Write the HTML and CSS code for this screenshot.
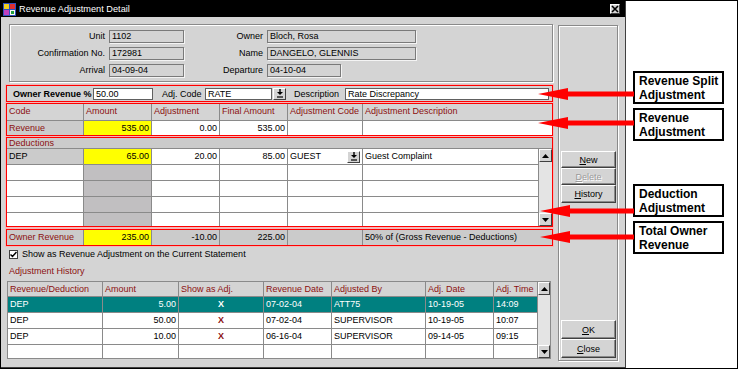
FILE: index.html
```html
<!DOCTYPE html>
<html lang="en">
<head>
    <meta charset="UTF-8">
    <title>Revenue Adjustment Detail</title>
    <link rel="stylesheet" href="styles.css">
</head>
<body>
<div class="screen">
    <div class="dialog">
        <div class="titlebar">
            <svg class="appicon" width="13" height="13" viewBox="0 0 13 13">
                <rect x="0" y="0" width="13" height="13" fill="#3050c0"/>
                <rect x="1" y="1" width="5" height="5" fill="#f0d020"/>
                <rect x="7" y="1" width="5" height="5" fill="#e03030"/>
                <rect x="1" y="7" width="5" height="5" fill="#c040c0"/>
                <rect x="7" y="7" width="5" height="5" fill="#f8f8f8"/>
                <rect x="8" y="8" width="3" height="3" fill="#20a040"/>
            </svg>
            <span class="title">Revenue Adjustment Detail</span>
            <span class="closebox">
                <svg width="8" height="8" viewBox="0 0 8 8"><path d="M1 1L7 7M7 1L1 7" stroke="#000" stroke-width="1.6"/></svg>
            </span>
        </div>

        <div class="body">
            <div class="main">
                <div class="group info">
                    <span class="lbl">Unit</span><span class="field">1102</span>
                    <span class="lbl">Owner</span><span class="field">Bloch, Rosa</span>
                    <span class="lbl">Confirmation No.</span><span class="field">172981</span>
                    <span class="lbl">Name</span><span class="field">DANGELO, GLENNIS</span>
                    <span class="lbl">Arrival</span><span class="field">04-09-04</span>
                    <span class="lbl">Departure</span><span class="field short">04-10-04</span>
                </div>

                <div class="redbox split">
                    <span class="bold-lbl">Owner Revenue %</span>
                    <span class="edit pct">50.00</span>
                    <span class="lbl-adj">Adj. Code</span>
                    <span class="edit code">RATE</span>
                    <span class="dropbtn">
                        <svg width="8" height="9" viewBox="0 0 8 9"><path d="M4 0v3" stroke="#000" stroke-width="1.4"/><polygon points="1,3 7,3 4,6" fill="#000"/><path d="M1 8h6" stroke="#000" stroke-width="1.2"/></svg>
                    </span>
                    <span class="lbl-desc">Description</span>
                    <span class="edit desc">Rate Discrepancy</span>
                </div>

                <div class="redbox revbox">
                    <div class="cols rev">
                        <div class="hd">Code</div>
                        <div class="hd">Amount</div>
                        <div class="hd">Adjustment</div>
                        <div class="hd">Final Amount</div>
                        <div class="hd">Adjustment Code</div>
                        <div class="hd">Adjustment Description</div>
                        <div class="hatch maroon">Revenue</div>
                        <div class="yellow num">535.00</div>
                        <div class="white num">0.00</div>
                        <div class="white num">535.00</div>
                        <div class="white"></div>
                        <div class="white"></div>
                    </div>
                </div>

                <div class="redbox ded">
                    <div class="ded-head">Deductions</div>
                    <div class="ded-body">
                        <div class="cols ded-rows">
                            <div class="hatch">DEP</div>
                            <div class="yellow num">65.00</div>
                            <div class="white num">20.00</div>
                            <div class="white num">85.00</div>
                            <div class="white pick">GUEST
                                <span class="dropbtn">
                                    <svg width="8" height="9" viewBox="0 0 8 9"><path d="M4 0v3" stroke="#000" stroke-width="1.4"/><polygon points="1,3 7,3 4,6" fill="#000"/><path d="M1 8h6" stroke="#000" stroke-width="1.2"/></svg>
                                </span>
                            </div>
                            <div class="white">Guest Complaint</div>

                            <div class="white"></div><div class="dark"></div><div class="white"></div><div class="white"></div><div class="white"></div><div class="white"></div>
                            <div class="white"></div><div class="dark"></div><div class="white"></div><div class="white"></div><div class="white"></div><div class="white"></div>
                            <div class="white"></div><div class="dark"></div><div class="white"></div><div class="white"></div><div class="white"></div><div class="white"></div>
                            <div class="white"></div><div class="dark"></div><div class="white"></div><div class="white"></div><div class="white"></div><div class="white"></div>
                        </div>
                        <div class="vscroll">
                            <span class="sbtn"><svg width="7" height="4" viewBox="0 0 7 4"><polygon points="0,4 7,4 3.5,0" fill="#000"/></svg></span>
                            <span class="track"></span>
                            <span class="sbtn"><svg width="7" height="4" viewBox="0 0 7 4"><polygon points="0,0 7,0 3.5,4" fill="#000"/></svg></span>
                        </div>
                    </div>
                </div>

                <div class="redbox totalbox">
                    <div class="cols total">
                        <div class="hatch maroon">Owner Revenue</div>
                        <div class="yellow num">235.00</div>
                        <div class="hatch num">-10.00</div>
                        <div class="hatch num">225.00</div>
                        <div class="hatch"></div>
                        <div class="hatch">50% of (Gross Revenue - Deductions)</div>
                    </div>
                </div>

                <div class="check">
                    <span class="box">
                        <svg width="7" height="7" viewBox="0 0 7 7"><path d="M0.5 3.5L2.5 5.5L6.5 1" fill="none" stroke="#000" stroke-width="1.5"/></svg>
                    </span>
                    <span>Show as Revenue Adjustment on the Current Statement</span>
                </div>

                <div class="hist-title">Adjustment History</div>

                <div class="hist">
                    <div class="hcols">
                        <div class="hd">Revenue/Deduction</div>
                        <div class="hd">Amount</div>
                        <div class="hd">Show as Adj.</div>
                        <div class="hd">Revenue Date</div>
                        <div class="hd">Adjusted By</div>
                        <div class="hd">Adj. Date</div>
                        <div class="hd">Adj. Time</div>

                        <div class="sel">DEP</div>
                        <div class="sel num">5.00</div>
                        <div class="sel mark">X</div>
                        <div class="sel">07-02-04</div>
                        <div class="sel">ATT75</div>
                        <div class="sel">10-19-05</div>
                        <div class="sel">14:09</div>

                        <div class="white">DEP</div>
                        <div class="white num">50.00</div>
                        <div class="white mark">X</div>
                        <div class="white">07-02-04</div>
                        <div class="white">SUPERVISOR</div>
                        <div class="white">10-19-05</div>
                        <div class="white">10:07</div>

                        <div class="white">DEP</div>
                        <div class="white num">10.00</div>
                        <div class="white mark">X</div>
                        <div class="white">06-16-04</div>
                        <div class="white">SUPERVISOR</div>
                        <div class="white">09-14-05</div>
                        <div class="white">09:15</div>

                        <div class="white"></div><div class="white"></div><div class="white"></div><div class="white"></div><div class="white"></div><div class="white"></div><div class="white"></div>
                    </div>
                    <div class="vscroll">
                        <span class="sbtn"><svg width="7" height="4" viewBox="0 0 7 4"><polygon points="0,4 7,4 3.5,0" fill="#000"/></svg></span>
                        <span class="track"></span>
                        <span class="sbtn"><svg width="7" height="4" viewBox="0 0 7 4"><polygon points="0,0 7,0 3.5,4" fill="#000"/></svg></span>
                    </div>
                </div>
            </div>

            <div class="side">
                <span class="btn"><u>N</u>ew</span>
                <span class="btn off"><u>D</u>elete</span>
                <span class="btn tall"><u>H</u>istory</span>
                <span class="btn big push"><u>O</u>K</span>
                <span class="btn big"><u>C</u>lose</span>
            </div>
        </div>
    </div>

    <div class="notes">
        <div class="note first">Revenue Split<br>Adjustment</div>
        <div class="note">Revenue<br>Adjustment</div>
        <div class="note third">Deduction<br>Adjustment</div>
        <div class="note">Total Owner<br>Revenue</div>
    </div>

    <svg class="arrows" width="738" height="369" viewBox="0 0 738 369">
        <polygon points="538,94 568,88 568,91.5 634,91.5 634,96.5 568,96.5 568,100" fill="#ff0000"/>
        <polygon points="538,123 568,117 568,120.5 634,120.5 634,125.5 568,125.5 568,129" fill="#ff0000"/>
        <polygon points="540,211 570,205 570,208.5 634,208.5 634,213.5 570,213.5 570,217" fill="#ff0000"/>
        <polygon points="540,237 570,231 570,234.5 634,234.5 634,239.5 570,239.5 570,243" fill="#ff0000"/>
    </svg>
</div>
</body>
</html>
```

FILE: styles.css
```css
body
{
    margin: 0;
    font-family: "Liberation Sans", Arial, sans-serif;
    font-size: 9px;
    color: #000;
}
*
{
    box-sizing: border-box;
}
.screen
{
    position: relative;
    width: 738px;
    height: 369px;
    border: 1px solid #000;
    background: #fff;
    display: flex;
}
.dialog
{
    width: 625px;
    height: 367px;
    background: #d4d4d4;
    border-right: 1px solid #404040;
    border-bottom: 1px solid #404040;
    display: flex;
    flex-direction: column;
}
.titlebar
{
    height: 16px;
    background: #000;
    color: #fff;
    display: flex;
    align-items: center;
    padding: 0 5px 0 2px;
}
.appicon
{
    margin-right: 3px;
}
.title
{
    font-size: 9.2px;
}
.closebox
{
    margin-left: auto;
    width: 10px;
    height: 10px;
    background: #d4d4d4;
    border-top: 1px solid #fff;
    border-left: 1px solid #fff;
    border-right: 1px solid #404040;
    border-bottom: 1px solid #404040;
    display: flex;
    align-items: center;
    justify-content: center;
}
.body
{
    display: flex;
    padding: 7px 0 0 5px;
}
.main
{
    width: 547px;
    display: flex;
    flex-direction: column;
}

/* top info group */
.group
{
    border: 1px solid #8a8a8a;
    box-shadow: inset 1px 1px 0 #fff, 1px 1px 0 #fff;
}
.info
{
    margin-left: 3px;
    width: 544px;
    height: 58px;
    padding: 5px 0 0 1px;
    display: grid;
    grid-template-columns: 94px 75px 75px 149px;
    grid-auto-rows: 13px;
    column-gap: 4px;
    row-gap: 4px;
    align-content: start;
}
.lbl
{
    text-align: right;
    line-height: 13px;
    white-space: nowrap;
}
.field
{
    border: 1px solid #7a7a7a;
    box-shadow: 1px 1px 0 #f4f4f4;
    padding-left: 2px;
    line-height: 11px;
    white-space: nowrap;
}
.field.short
{
    width: 74px;
}

/* red outlined areas */
.redbox
{
    border: 1px solid #ff0000;
    box-shadow: 0 0 0 1px #f2b8b8;
}
.split
{
    margin-top: 3px;
    height: 17px;
    display: flex;
    align-items: center;
    padding-left: 6px;
}
.bold-lbl
{
    font-weight: bold;
    width: 80px;
    white-space: nowrap;
}
.edit
{
    height: 12px;
    line-height: 10px;
    background: #fff;
    border: 1px solid #606060;
    padding-left: 2px;
    white-space: nowrap;
}
.pct
{
    width: 60px;
}
.lbl-adj
{
    margin-left: 9px;
    width: 43px;
}
.code
{
    width: 67px;
}
.dropbtn
{
    width: 13px;
    height: 12px;
    margin-left: 1px;
    background: #d4d4d4;
    border-top: 1px solid #fff;
    border-left: 1px solid #fff;
    border-right: 1px solid #404040;
    border-bottom: 1px solid #404040;
    display: flex;
    align-items: center;
    justify-content: center;
}
.lbl-desc
{
    margin-left: 8px;
    width: 51px;
}
.desc
{
    flex: 1;
    margin-right: 3px;
}

/* grids */
.cols
{
    display: grid;
    grid-template-columns: 76px 67px 67px 67px 74px 1fr;
    gap: 1px;
    background: #8a8a8a;
}
.cols > div, .hcols > div
{
    padding: 0 2px;
    white-space: nowrap;
    overflow: hidden;
}
.revbox
{
    margin-top: 1px;
}
.rev
{
    grid-template-rows: 16px 14px;
    line-height: 14px;
}
.hd
{
    background: #d4d4d4;
    color: #8c1010;
    line-height: 15px;
}
.hatch
{
    background: #cbcbcb;
}
.dark
{
    background: #c1bfc1;
}
.maroon
{
    color: #8c1010;
}
.yellow
{
    background: #ffff00;
}
.white
{
    background: #fff;
}
.num
{
    text-align: right;
}
.ded
{
    margin-top: 1px;
    height: 90px;
    display: flex;
    flex-direction: column;
}
.ded-head
{
    height: 11px;
    line-height: 10px;
    background: #cbcbcb;
    color: #8c1010;
    padding-left: 2px;
    border-bottom: 1px solid #8a8a8a;
}
.ded-body
{
    flex: 1;
    display: flex;
    overflow: hidden;
}
.ded-rows
{
    flex: 1;
    grid-template-rows: repeat(5, 15px);
    line-height: 15px;
    overflow: hidden;
}
.pick
{
    display: flex;
    align-items: center;
}
.pick .dropbtn
{
    margin-left: auto;
}
.totalbox
{
    margin-top: 2px;
}
.total
{
    grid-template-rows: 15px;
    line-height: 15px;
}

/* scrollbars */
.vscroll
{
    width: 14px;
    display: flex;
    flex-direction: column;
    background: #e4e4e4;
    border-left: 1px solid #8a8a8a;
}
.sbtn
{
    height: 13px;
    background: #d4d4d4;
    border-top: 1px solid #fff;
    border-left: 1px solid #fff;
    border-right: 1px solid #404040;
    border-bottom: 1px solid #404040;
    display: flex;
    align-items: center;
    justify-content: center;
}
.track
{
    flex: 1;
}

/* checkbox + history */
.check
{
    margin: 2px 0 0 3px;
    height: 12px;
    display: flex;
    align-items: center;
    gap: 4px;
}
.check .box
{
    width: 9px;
    height: 9px;
    background: #fff;
    border: 1px solid #404040;
    display: flex;
    align-items: center;
    justify-content: center;
}
.hist-title
{
    margin: 5px 0 0 3px;
    height: 12px;
    line-height: 12px;
    color: #8c1010;
}
.hist
{
    margin: 4px 0 0 1px;
    width: 544px;
    height: 78px;
    border: 1px solid #8a8a8a;
    display: flex;
}
.hcols
{
    flex: 1;
    display: grid;
    grid-template-columns: 94px 75px 84px 67px 93px 67px 1fr;
    grid-template-rows: 14px repeat(4, 15px);
    gap: 1px;
    background: #8a8a8a;
    line-height: 15px;
    overflow: hidden;
}
.hcols .hd
{
    line-height: 14px;
}
.sel
{
    background: #008080;
    color: #fff;
}
.mark
{
    text-align: center;
    font-weight: bold;
    color: #8c1010;
}
.sel.mark
{
    color: #fff;
}
.hist .vscroll
{
    width: 13px;
}

/* right button panel */
.side
{
    margin: 1px 0 0 5px;
    width: 60px;
    height: 336px;
    border: 1px solid #8a8a8a;
    box-shadow: inset 1px 1px 0 #fff, 1px 1px 0 #fff;
    padding: 125px 0 2px 2px;
    display: flex;
    flex-direction: column;
}
.btn
{
    width: 55px;
    height: 17px;
    background: #d4d4d4;
    border-top: 1px solid #fff;
    border-left: 1px solid #fff;
    border-right: 1px solid #404040;
    border-bottom: 1px solid #404040;
    box-shadow: inset -1px -1px 0 #8a8a8a;
    display: flex;
    align-items: center;
    justify-content: center;
}
.btn.off
{
    color: #9a9a9a;
    text-shadow: 1px 1px 0 #fff;
}
.btn.tall
{
    height: 18px;
}
.btn.big
{
    height: 19px;
}
.btn.push
{
    margin-top: auto;
}

/* annotations */
.notes
{
    flex: 1;
    padding: 70px 0 0 7px;
}
.note
{
    width: 91px;
    height: 33px;
    border: 2px solid #000;
    padding: 1px 4px;
    font-size: 12px;
    font-weight: bold;
    line-height: 14px;
    white-space: nowrap;
}
.note + .note
{
    margin-top: 4px;
}
.note.third
{
    margin-top: 43px;
}
.arrows
{
    position: absolute;
    top: -1px;
    left: -1px;
    pointer-events: none;
}
```
